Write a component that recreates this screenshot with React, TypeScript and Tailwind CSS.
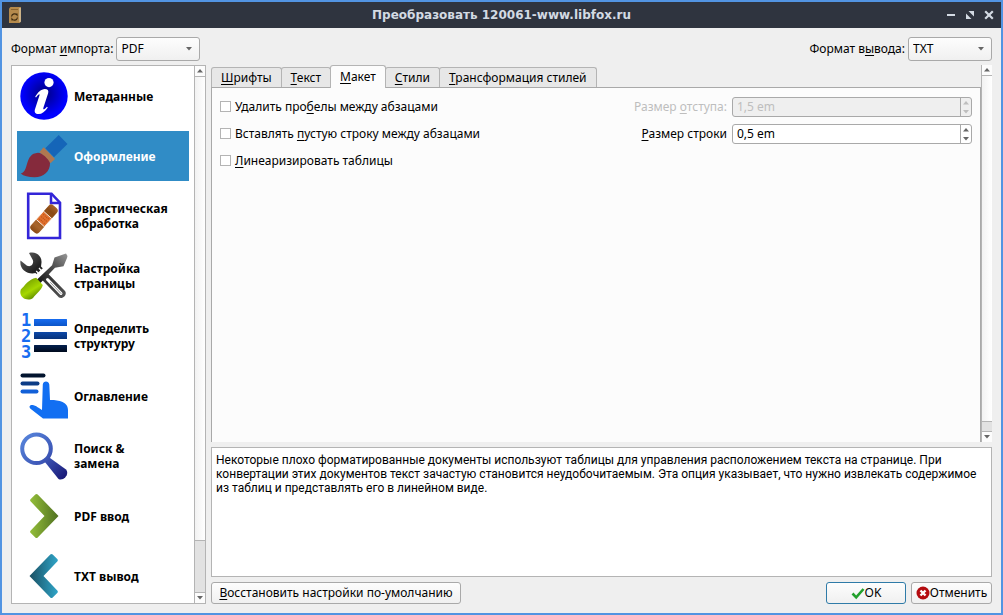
import { useState } from 'react'
import type { ReactNode } from 'react'
import clsx from 'clsx'

// "&" marks the accelerator letter
const Mnemonic = ({ text }: { text: string }) => {
  const at = text.indexOf('&')
  if (at < 0) return <>{text}</>
  return (
    <span className="whitespace-nowrap">
      {text.slice(0, at)}
      <span className="underline decoration-1 underline-offset-2 [text-decoration-skip-ink:none]">{text[at + 1]}</span>
      {text.slice(at + 2)}
    </span>
  )
}

const Arrow = ({ up, className }: { up?: boolean; className?: string }) => (
  <svg width="6" height="4" viewBox="0 0 6 4" className={className} fill="currentColor" aria-hidden="true">
    <path d={up ? 'M3 0 6 3.5H0Z' : 'M3 3.5 0 0h6Z'} />
  </svg>
)

const InfoIcon = () => (
  <svg width="48" height="48" viewBox="0 0 48 48" aria-hidden="true">
    <defs>
      <radialGradient id="info" cx="0.5" cy="0.45" r="0.55">
        <stop offset="0" stopColor="#000080" />
        <stop offset="0.85" stopColor="#0000ff" />
      </radialGradient>
    </defs>
    <circle cx="24" cy="24" r="23.7" fill="url(#info)" />
    <circle cx="29" cy="10.6" r="4.6" fill="#fff" />
    <path
      d="M15.200 24.800c2.600-4.600 6-7.600 9.600-7.800 2.900 0 4 1.700 3.400 3.900l-4.800 14.800c-.6 2.200.6 2.200 3.500-1l.9.8c-2.800 4.200-6 6.700-9.400 6.600-3.200-.1-4.200-2.200-3.500-4.600l4.600-14.200c.5-1.700-.9-1.400-3.500 2.100Z"
      fill="#fff"
    />
  </svg>
)

const BrushIcon = () => (
  <svg width="48" height="48" viewBox="0 0 48 48" aria-hidden="true">
    <path d="M38.700 3 47.500 12 34 25.300 25.300 16.300Z" fill="#1565b8" />
    <path d="M23.700 15.300 35 27l-4.500 4.300L19.500 20Z" fill="#b07850" />
    <path d="M18 20.700c4 .3 10.300 5.800 12 10.300.3 8.500-6.500 14.200-15.500 14.200C8.500 45.200 3.500 44 .8 41.500 9.500 39.500 4 21.700 18 20.700Z" fill="#852a3c" />
  </svg>
)

const HeuristicsIcon = () => (
  <svg width="48" height="48" viewBox="0 0 48 48" aria-hidden="true">
    <defs>
      <linearGradient id="patch" x1="0" y1="0" x2="1" y2="0">
        <stop offset="0" stopColor="#8a4a14" />
        <stop offset="0.2" stopColor="#a8642a" />
        <stop offset="0.8" stopColor="#8a4a14" />
        <stop offset="1" stopColor="#a8642a" />
      </linearGradient>
    </defs>
    <path d="M8.200 1.700h23.300l8.500 9V46H8.200Z" fill="#fff" stroke="#3325d8" strokeWidth="2.600" />
    <path d="M31 2v9h9" fill="none" stroke="#3325d8" strokeWidth="2.500" />
    <g transform="rotate(-48 24 27)">
      <rect x="7.500" y="21.500" width="33" height="11" rx="3.500" fill="url(#patch)" />
      <rect x="18.500" y="21.500" width="11" height="11" fill="#e0702c" stroke="#fff" strokeWidth="0.800" />
      <path d="M21 23.500v7M24 23.500v7M27 23.500v7" stroke="#b84a14" strokeWidth="1" strokeDasharray="1 1" />
    </g>
  </svg>
)

const ToolsIcon = () => (
  <svg width="48" height="48" viewBox="0 0 48 48" aria-hidden="true">
    <defs>
      <linearGradient id="wrench" x1="0" y1="0" x2="1" y2="1">
        <stop offset="0" stopColor="#666" />
        <stop offset="0.35" stopColor="#222" />
        <stop offset="1" stopColor="#555" />
      </linearGradient>
      <linearGradient id="blade" x1="0" y1="1" x2="1" y2="0">
        <stop offset="0" stopColor="#111" />
        <stop offset="0.6" stopColor="#555" />
        <stop offset="1" stopColor="#999" />
      </linearGradient>
      <linearGradient id="grip" x1="0.200" y1="0.200" x2="0.700" y2="1">
        <stop offset="0" stopColor="#7aa600" />
        <stop offset="0.500" stopColor="#a6d800" />
        <stop offset="1" stopColor="#4f7a00" />
      </linearGradient>
    </defs>
    <path
      d="M9 1C16-1 22 4 21.500 10.500l-.5 4 24 24.500c2.500 3-1.500 8.500-6 6.500L15.500 21C8 23-1 17.500.5 8.500l6.500 5.200q3 1.200 5-.7 1.800-2.500.8-5Z"
      fill="url(#wrench)"
    />
    <path d="m27.500 27.500 13.500 14" stroke="#fff" strokeWidth="3" strokeLinecap="round" />
    <path d="m30.500 30.500 10.500 11" stroke="#777" strokeWidth="0.800" strokeLinecap="round" />
    <path d="m19 16 4 4.500M16.200 19l4 4" stroke="#fff" strokeWidth="1.200" />
    <path d="M15 27 36 8" stroke="#fff" strokeWidth="5.500" />
    <path d="M47.500 4 46 1.500 34.500 5.500l-2.400 7.700-15.300 14.600 3.400 3.400L35 15.800l8.500-1.500L47 6Z" fill="url(#blade)" />
    <path d="M16.200 25.700 22.800 33c-1.500 5.500-6.300 8-9.800 13C8 50-2 46 .8 37.500c4-3.500 7.500-10.500 15.400-11.800Z" fill="url(#grip)" />
  </svg>
)

const StructureIcon = () => (
  <svg width="48" height="48" viewBox="0 0 48 48" className="overflow-visible" aria-hidden="true">
    <defs>
      <linearGradient id="line1" x1="0" y1="0" x2="0" y2="1">
        <stop offset="0" stopColor="#176cf0" />
        <stop offset="1" stopColor="#0b55c8" />
      </linearGradient>
      <linearGradient id="line2" x1="0" y1="0" x2="0" y2="1">
        <stop offset="0" stopColor="#0c48a8" />
        <stop offset="1" stopColor="#07337a" />
      </linearGradient>
      <linearGradient id="line3" x1="0" y1="0" x2="0" y2="1">
        <stop offset="0" stopColor="#02204f" />
        <stop offset="1" stopColor="#000a1c" />
      </linearGradient>
    </defs>
    <text fill="#176cf0" fontFamily="DejaVu Sans Mono, monospace" fontWeight="700" fontSize="17">
      <tspan x="1" y="14">1</tspan>
      <tspan x="1" y="30">2</tspan>
      <tspan x="1" y="46">3</tspan>
    </text>
    <rect x="14" y="7" width="33" height="7" rx="0.500" fill="url(#line1)" />
    <rect x="14" y="20" width="33" height="7" rx="0.500" fill="url(#line2)" />
    <rect x="14" y="33" width="33" height="7" rx="0.500" fill="url(#line3)" />
  </svg>
)

const TocIcon = () => (
  <svg width="48" height="48" viewBox="0 0 48 48" aria-hidden="true">
    <g strokeLinecap="round" strokeWidth="4">
      <path d="M2.500 3.500h21" stroke="#02142e" />
      <path d="M2.500 11.500h15" stroke="#0c3c86" />
      <path d="M2.500 19.500h14" stroke="#1260d8" />
    </g>
    <path
      d="M22.800 12.500c.3-4 6-4 6.500 0L30 28c6 0 18 .5 18 10v8.500H23L10.500 36.700c-2-2.200-.5-4 2-3.700 3 0 7.500 4 9.500 5Z"
      fill="#126ff2"
    />
  </svg>
)

const SearchIcon = () => (
  <svg width="48" height="48" viewBox="0 0 48 48" aria-hidden="true">
    <defs>
      <linearGradient id="lens" x1="0" y1="0" x2="48" y2="48" gradientUnits="userSpaceOnUse">
        <stop offset="0" stopColor="#5b8be0" />
        <stop offset="0.55" stopColor="#3c55b5" />
        <stop offset="1" stopColor="#14106e" />
      </linearGradient>
    </defs>
    <circle cx="16.500" cy="16.700" r="14.300" fill="none" stroke="url(#lens)" strokeWidth="4" />
    <path d="m24.500 29.500 4.500-4.300L46 37.500c4 4.500-2.500 12-7.500 9.500Z" fill="url(#lens)" />
  </svg>
)

const ChevronIcon = ({ left }: { left?: boolean }) => (
  <svg width="48" height="48" viewBox="0 0 48 48" aria-hidden="true">
    <defs>
      <linearGradient id="green" x1="0" y1="0" x2="1" y2="0">
        <stop offset="0" stopColor="#94be3a" />
        <stop offset="1" stopColor="#4f7020" />
      </linearGradient>
      <linearGradient id="teal" x1="0" y1="0" x2="1" y2="0">
        <stop offset="0" stopColor="#1a4f62" />
        <stop offset="1" stopColor="#2fa5c8" />
      </linearGradient>
    </defs>
    {left ? (
      <path d="m9.500 24 20.800-21.500q1.200-1 2.400 0l4.800 4.800q.8 1 0 2L23.500 24l14 14.700q.8 1 0 2l-4.800 4.800q-1.200 1-2.400 0Z" fill="url(#teal)" />
    ) : (
      <path d="M38.500 24 17.700 2.500q-1.200-1-2.400 0l-4.800 4.800q-.8 1 0 2L24.500 24l-14 14.700q-.8 1 0 2l4.800 4.800q1.200 1 2.400 0Z" fill="url(#green)" />
    )}
  </svg>
)

const sections: { title: string; icon: ReactNode }[] = [
  { title: 'Метаданные', icon: <InfoIcon /> },
  { title: 'Оформление', icon: <BrushIcon /> },
  { title: 'Эвристическая\nобработка', icon: <HeuristicsIcon /> },
  { title: 'Настройка\nстраницы', icon: <ToolsIcon /> },
  { title: 'Определить\nструктуру', icon: <StructureIcon /> },
  { title: 'Оглавление', icon: <TocIcon /> },
  { title: 'Поиск &\nзамена', icon: <SearchIcon /> },
  { title: 'PDF ввод', icon: <ChevronIcon /> },
  { title: 'TXT вывод', icon: <ChevronIcon left /> },
]

const tabs = ['&Шрифты', '&Текст', '&Макет', '&Стили', '&Трансформация стилей']

const options = ['Удалить про&белы между абзацами', 'Вставлять &пустую строку между абзацами', '&Линеаризировать таблицы']

// shown: part of the content that fits on screen, 0..1
const ScrollBar = ({ shown }: { shown: number }) => (
  <div className="flex w-[11px] shrink-0 flex-col border-l border-[#b4b4b4] bg-[#e2e2e2]">
    <button type="button" aria-label="Вверх" className="flex h-[11px] items-center justify-center border-b border-[#b4b4b4] bg-[#fcfcfc] text-[#666]">
      <Arrow up />
    </button>
    <div className="flex-1">
      <div className="border-b border-[#b4b4b4] bg-linear-to-r from-[#f2f2f2] to-white" style={{ height: `${shown * 100}%` }} />
    </div>
    <button type="button" aria-label="Вниз" className="flex h-[11px] items-center justify-center border-t border-[#b4b4b4] bg-[#fcfcfc] text-[#666]">
      <Arrow />
    </button>
  </div>
)

const FormatSelect = ({ id, label, items }: { id: string; label: string; items: string[] }) => (
  <div className="flex items-center gap-[3px]">
    <label htmlFor={id}>
      <Mnemonic text={label} />
    </label>
    <div className="relative">
      <select
        id={id}
        className="block h-6 w-[84px] appearance-none rounded-[3px] border border-[#a9a9a9] bg-linear-to-b from-[#fdfdfd] to-[#f0f0f0] pl-1 outline-none"
      >
        {items.map((item) => (
          <option key={item}>{item}</option>
        ))}
      </select>
      <Arrow className="pointer-events-none absolute top-[10px] right-2 text-[#666]" />
    </div>
  </div>
)

const SpinBox = ({ id, label, value, disabled }: { id: string; label: string; value: string; disabled?: boolean }) => (
  <div className={clsx('flex items-center justify-end gap-[5px]', disabled && 'text-[#bebebe]')}>
    <label htmlFor={id}>
      <Mnemonic text={label} />
    </label>
    <div className={clsx('flex h-5 w-60 overflow-hidden rounded-[3px] border border-[#a9a9a9]', disabled ? 'bg-[#efefef]' : 'bg-white')}>
      <input id={id} type="text" defaultValue={value} disabled={disabled} className="min-w-0 flex-1 px-1 outline-none" />
      <div className={clsx('flex w-[11px] flex-col border-l border-[#a9a9a9]', !disabled && 'text-[#666]')}>
        <button type="button" aria-label="Увеличить" disabled={disabled} className="flex flex-1 items-center justify-center">
          <Arrow up />
        </button>
        <button type="button" aria-label="Уменьшить" disabled={disabled} className="flex flex-1 items-center justify-center">
          <Arrow />
        </button>
      </div>
    </div>
  </div>
)

const TitleBar = () => (
  <header className="flex h-[26px] items-center bg-[#2f343f] px-[7px]">
    <div className="flex-1">
      <svg width="12" height="16" viewBox="0 0 12 16" aria-hidden="true">
        <path d="M0 1.500 1.500 0H12v14l-1 2H0Z" fill="#b58a4c" />
        <path d="M11 1v14" stroke="#dccdb0" strokeWidth="1.200" />
        <path d="M2 2.500h7" stroke="#8a6430" />
        <path d="M2.500 9.500c.5-3 4-3.500 5.500-1.500V6.500M8.500 10.500c-.5 3-4 3.500-5.500 1.500v1.500" fill="none" stroke="#3c2a10" strokeWidth="1.200" />
      </svg>
    </div>
    <h1 className="font-['DejaVu_Sans',sans-serif] text-xs font-bold text-[#d3dae3]">Преобразовать 120061-www.libfox.ru</h1>
    <div className="flex flex-1 items-center justify-end gap-[9px] text-[#d3dae3]">
      <button type="button" aria-label="Свернуть">
        <svg width="10" height="10" viewBox="0 0 10 10" fill="currentColor">
          <path d="M1 4h8v2H1z" />
        </svg>
      </button>
      <button type="button" aria-label="Развернуть">
        <svg width="10" height="10" viewBox="0 0 10 10" fill="currentColor">
          <path d="M3.500 1H9v5.500ZM1 3.500V9h5.500Z" />
        </svg>
      </button>
      <button type="button" aria-label="Закрыть">
        <svg width="10" height="10" viewBox="0 0 10 10" fill="none" stroke="currentColor" strokeWidth="2.200">
          <path d="m1.200 1.200 7.600 7.600M8.800 1.200 1.200 8.800" />
        </svg>
      </button>
    </div>
  </header>
)

const buttonClass = 'flex h-[22px] items-center justify-center rounded-[3px] border bg-linear-to-b from-[#fdfdfd] to-[#f0f0f0]'

const App = () => {
  const [section, setSection] = useState(1)
  const [tab, setTab] = useState(2)

  return (
    <div className="flex min-h-screen flex-col border-2 border-[#5294e2] bg-[#efefef] font-['Noto_Sans',sans-serif] text-xs text-black">
      <TitleBar />
      <main className="flex flex-1 flex-col p-[9px]">
        <div className="flex justify-between">
          <FormatSelect id="input-format" label="Формат &импорта:" items={['PDF', 'EPUB']} />
          <FormatSelect id="output-format" label="Формат в&ывода:" items={['TXT', 'EPUB']} />
        </div>

        <div className="mt-1 flex flex-1 gap-[5px]">
          <nav className="flex w-[195px] shrink-0 border border-[#b4b4b4] bg-white">
            <ul className="flex flex-1 flex-col gap-2.5 px-[5px] pt-[5px]">
              {sections.map(({ title, icon }, i) => (
                <li key={title}>
                  <button
                    type="button"
                    onClick={() => setSection(i)}
                    className={clsx(
                      'flex h-[50px] w-full items-center gap-1.5 pl-[3px] text-left leading-[15px] font-bold whitespace-pre',
                      i === section && 'bg-[#308cc6] text-white',
                    )}
                  >
                    {icon}
                    {title}
                  </button>
                </li>
              ))}
            </ul>
            <ScrollBar shown={0.9} />
          </nav>

          <div className="flex min-w-0 flex-1 flex-col gap-[5px]">
            <div className="flex flex-1">
              <div className="flex min-w-0 flex-1 flex-col">
                <div role="tablist" className="flex h-[22px] items-end">
                  {tabs.map((name, i) => (
                    <button
                      key={name}
                      type="button"
                      role="tab"
                      aria-selected={i === tab}
                      onClick={() => setTab(i)}
                      className={clsx(
                        'rounded-t-[3px] border border-b-0 border-[#b4b4b4] px-[9px]',
                        i === tab ? 'z-10 -mb-px h-[23px] bg-[#fcfcfc]' : 'h-5 bg-[#e7e7e7]',
                        i > 0 && '-ml-px',
                      )}
                    >
                      <Mnemonic text={name} />
                    </button>
                  ))}
                </div>
                <section role="tabpanel" className="flex flex-1 items-start justify-between border-t border-r border-l border-[#a9a9a9] bg-[#fcfcfc] px-2 pt-[9px]">
                  <div className="flex flex-col gap-[7px]">
                    {options.map((option) => (
                      <label key={option} className="flex h-5 items-center gap-1">
                        <input type="checkbox" className="mb-px size-[11px] appearance-none border border-[#b4b4b4] bg-white checked:bg-[#308cc6]" />
                        <Mnemonic text={option} />
                      </label>
                    ))}
                  </div>
                  <div className="flex flex-col gap-[7px]">
                    <SpinBox id="indent-size" label="Размер &отступа:" value="1,5 em" disabled />
                    <SpinBox id="line-size" label="&Размер строки" value="0,5 em" />
                  </div>
                </section>
              </div>
              <ScrollBar shown={0.975} />
            </div>

            <p className="h-[130px] border border-[#b4b4b4] bg-white px-1 py-[5px] font-['Roboto','Noto_Sans',sans-serif] leading-[14px]">
              Некоторые плохо форматированные документы используют таблицы для управления расположением текста на странице. При
              <br />
              конвертации этих документов текст зачастую становится неудобочитаемым. Эта опция указывает, что нужно извлекать содержимое
              <br />
              из таблиц и представлять его в линейном виде.
            </p>

            <div className="flex gap-[5px]">
              <button type="button" className={clsx(buttonClass, 'mr-auto w-[250px] border-[#a9a9a9]')}>
                <Mnemonic text="&Восстановить настройки по-умолчанию" />
              </button>
              <button type="button" className={clsx(buttonClass, 'w-20 border-[#2f7ba8]')}>
                <svg width="14" height="14" viewBox="0 0 14 14" aria-hidden="true">
                  <path d="m1.500 7.500 3.700 3.800L12.500 3" fill="none" stroke="#22a02c" strokeWidth="2.600" />
                </svg>
                OK
              </button>
              <button type="button" className={clsx(buttonClass, 'w-[81px] border-[#a9a9a9]')}>
                <svg width="14" height="14" viewBox="0 0 14 14" className="shrink-0" aria-hidden="true">
                  <circle cx="7" cy="7" r="6.500" fill="#b40c10" />
                  <path d="m4.500 4.500 5 5M9.500 4.500l-5 5" stroke="#fff" strokeWidth="2.400" />
                </svg>
                Отменить
              </button>
            </div>
          </div>
        </div>
      </main>
    </div>
  )
}

export default App
